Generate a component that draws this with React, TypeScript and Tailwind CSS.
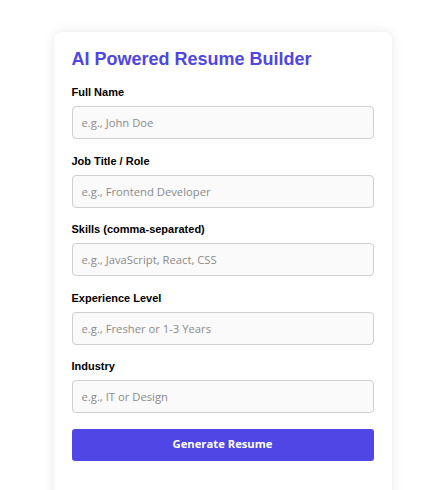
import React from "react";

const fields = [
  { label: "Full Name", placeholder: "e.g., John Doe" },
  { label: "Job Title / Role", placeholder: "e.g., Frontend Developer" },
  { label: "Skills (comma-separated)", placeholder: "e.g., JavaScript, React, CSS" },
  { label: "Experience Level", placeholder: "e.g., Fresher or 1-3 Years" },
  { label: "Industry", placeholder: "e.g., IT or Design" },
];

export default function App() {
  return (
    <div className="min-h-[490px] bg-white pt-[32px] overflow-hidden" style={{ fontFamily: "'Liberation Sans', Arial, sans-serif" }}>
      <div className="mx-auto w-[338px] min-h-[480px] bg-white rounded-[7px] shadow-[0_0_12px_rgba(0,0,0,0.1)] px-[18px] pt-[17px] pb-[18px] relative left-[-1px]">
        <h1 className="text-[18px] leading-[20px] font-bold text-[#4f46e5] mb-[17px]">
          AI Powered Resume Builder
        </h1>
        {fields.map((f) => (
          <div key={f.label} className="mb-[15.5px]">
            <label className="block text-[11px] leading-[13px] font-bold text-black mb-[7px]">
              {f.label}
            </label>
            <input
              type="text"
              placeholder={f.placeholder}
              className="block w-full h-[33px] bg-[#fafafa] border border-[#cfcfcf] rounded-[4px] px-[9px] text-[11.25px] placeholder:text-[#8a8a8a] outline-none"
              style={{ fontFamily: "'Open Sans', 'Noto Sans', sans-serif" }}
            />
          </div>
        ))}
        <button
          className="block w-full h-[32px] bg-[#4f46e5] text-white rounded-[3px] text-[11.25px] font-bold"
          style={{ fontFamily: "'Open Sans', 'Noto Sans', sans-serif" }}
        >
          Generate Resume
        </button>
      </div>
    </div>
  );
}
